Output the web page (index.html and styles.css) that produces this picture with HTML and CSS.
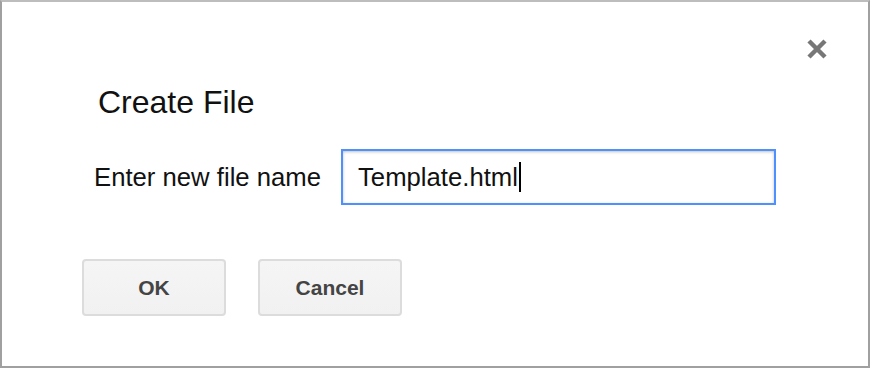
FILE: index.html
```html
<!DOCTYPE html>
<html lang="en">
<head>
    <meta charset="UTF-8">
    <meta name="viewport" content="width=device-width, initial-scale=1.0">
    <title>Create File</title>
    <link rel="stylesheet" href="styles.css">
</head>
<body>
    <div class="dialog">
        <div class="dialog-top">
            <button class="close-button" title="Close">
                <svg width="22" height="22" viewBox="0 0 22 22">
                    <path d="M3 3 L19 19 M19 3 L3 19" stroke="#777" stroke-width="4.5" fill="none"/>
                </svg>
            </button>
        </div>
        <h1 class="dialog-title">Create File</h1>
        <div class="form-row">
            <label for="file-name">Enter new file name</label>
            <div class="text-field" id="file-name"><span>Template.html</span><span class="caret"></span></div>
        </div>
        <div class="buttons">
            <button class="btn">OK</button>
            <button class="btn">Cancel</button>
        </div>
    </div>
</body>
</html>
```

FILE: styles.css
```css
html, body {
    margin: 0;
    padding: 0;
}
body {
    font-family: "Liberation Sans", Arial, sans-serif;
    color: #111;
    background: #fff;
}
.dialog {
    width: 870px;
    height: 368px;
    box-sizing: border-box;
    border: 2px solid #a0a0a0;
    border-top-color: #bdbdbd;
    background: #fff;
}
.dialog-top {
    display: flex;
    justify-content: flex-end;
    padding: 36px 40px 0 0;
}
.close-button {
    border: none;
    background: none;
    padding: 0;
    width: 22px;
    height: 22px;
    cursor: pointer;
}
.close-button svg {
    display: block;
    filter: blur(0.6px);
}
.dialog-title {
    margin: 24px 0 0 96px;
    font-size: 32px;
    line-height: 36px;
    font-weight: normal;
    color: #111;
}
.form-row {
    display: flex;
    align-items: center;
    gap: 20px;
    margin: 29px 0 0 92px;
}
label {
    font-size: 25.7px;
    color: #111;
}
.text-field {
    width: 435px;
    height: 56px;
    box-sizing: border-box;
    border: 2px solid #4d90fe;
    box-shadow: inset 0 1px 3px rgba(0, 0, 0, 0.25);
    padding-left: 15px;
    display: flex;
    align-items: center;
    font-size: 25.7px;
    color: #111;
}
.caret {
    display: inline-block;
    width: 2px;
    height: 30px;
    background: #000;
    margin-left: 1px;
}
.buttons {
    display: flex;
    gap: 32px;
    margin: 54px 0 0 80px;
}
.btn {
    width: 144px;
    height: 57px;
    box-sizing: border-box;
    border: 2px solid #dcdcdc;
    border-radius: 4px;
    background: linear-gradient(#f5f5f5, #f1f1f1);
    color: #444;
    font-family: "Liberation Sans", Arial, sans-serif;
    font-weight: bold;
    font-size: 21px;
    cursor: pointer;
}
```
